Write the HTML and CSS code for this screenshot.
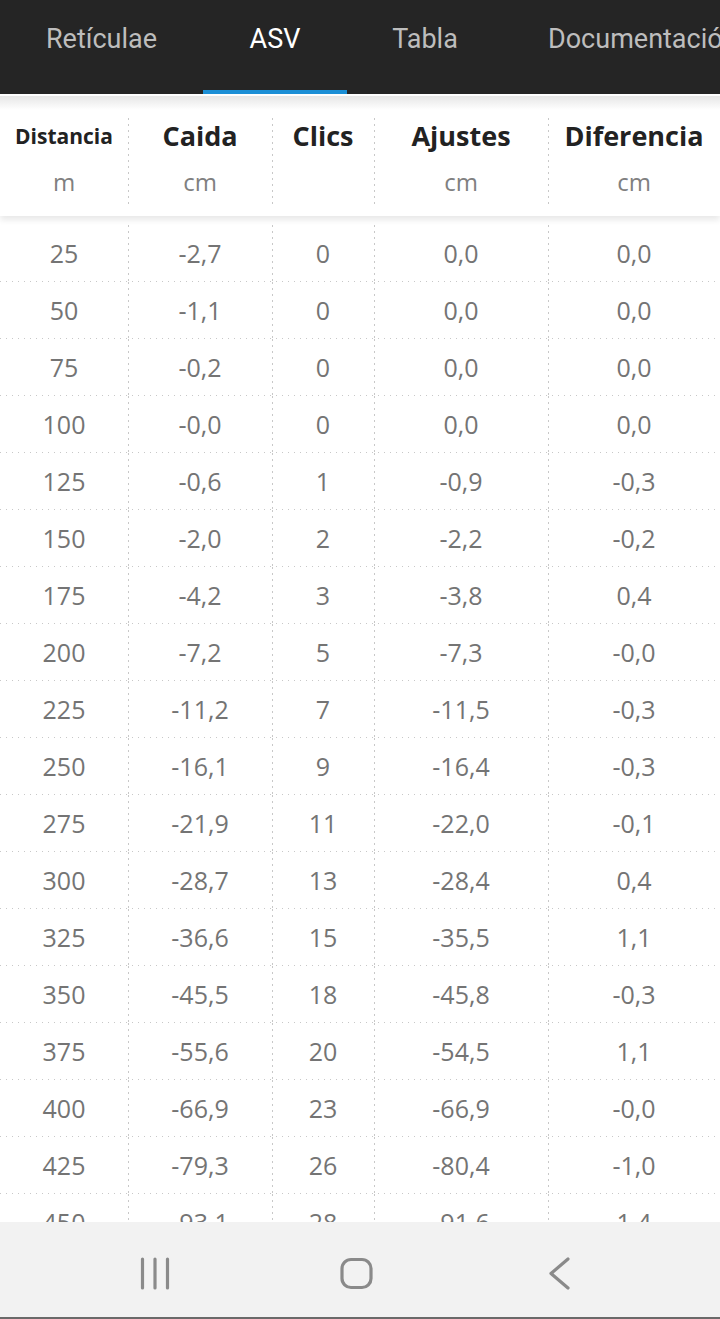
FILE: index.html
```html
<!DOCTYPE html>
<html lang="es">
<head>
    <meta charset="UTF-8">
    <meta name="viewport" content="width=device-width, initial-scale=1.0">
    <title>ASV</title>
    <link rel="stylesheet" href="styles.css">
</head>
<body>
    <div class="tabs">
        <div class="tab tab-ret">Retículae</div>
        <div class="tab tab-asv active">ASV</div>
        <div class="tab tab-tabla">Tabla</div>
        <div class="tab tab-doc">Documentación</div>
    </div>

    <div class="content">
        <div class="table-head">
            <div class="th first"><div class="title small">Distancia</div><div class="unit">m</div></div>
            <div class="th"><div class="title">Caida</div><div class="unit">cm</div></div>
            <div class="th"><div class="title">Clics</div><div class="unit"></div></div>
            <div class="th"><div class="title">Ajustes</div><div class="unit">cm</div></div>
            <div class="th"><div class="title">Diferencia</div><div class="unit">cm</div></div>
        </div>
        <div class="rows" id="rows"></div>
    </div>

    <div class="navbar">
        <svg class="nav-icon" viewBox="0 0 60 40">
            <line x1="17.5" y1="6" x2="17.5" y2="35"/>
            <line x1="30" y1="6" x2="30" y2="35"/>
            <line x1="42.5" y1="6" x2="42.5" y2="35"/>
        </svg>
        <svg class="nav-icon" viewBox="0 0 60 40">
            <rect x="15" y="6.5" width="29" height="28" rx="9"/>
        </svg>
        <svg class="nav-icon" viewBox="0 0 60 40">
            <polyline points="39,6 22,20.5 39,35"/>
        </svg>
    </div>

    <script>
const data = [
    ['25', '-2,7', '0', '0,0', '0,0'],
    ['50', '-1,1', '0', '0,0', '0,0'],
    ['75', '-0,2', '0', '0,0', '0,0'],
    ['100', '-0,0', '0', '0,0', '0,0'],
    ['125', '-0,6', '1', '-0,9', '-0,3'],
    ['150', '-2,0', '2', '-2,2', '-0,2'],
    ['175', '-4,2', '3', '-3,8', '0,4'],
    ['200', '-7,2', '5', '-7,3', '-0,0'],
    ['225', '-11,2', '7', '-11,5', '-0,3'],
    ['250', '-16,1', '9', '-16,4', '-0,3'],
    ['275', '-21,9', '11', '-22,0', '-0,1'],
    ['300', '-28,7', '13', '-28,4', '0,4'],
    ['325', '-36,6', '15', '-35,5', '1,1'],
    ['350', '-45,5', '18', '-45,8', '-0,3'],
    ['375', '-55,6', '20', '-54,5', '1,1'],
    ['400', '-66,9', '23', '-66,9', '-0,0'],
    ['425', '-79,3', '26', '-80,4', '-1,0'],
    ['450', '-93,1', '28', '-91,6', '1,4'],
    ['475', '-108,2', '31', '-107,4', '0,8']
];

const rows = document.getElementById('rows');
data.forEach(values => {
    const row = document.createElement('div');
    row.className = 'row';
    values.forEach((value, i) => {
        const cell = document.createElement('div');
        cell.className = i === 0 ? 'cell first' : 'cell';
        cell.textContent = value;
        row.appendChild(cell);
    });
    rows.appendChild(row);
});
    </script>
</body>
</html>
```

FILE: styles.css
```css
body {
    margin: 0;
    height: 1319px;
    display: flex;
    flex-direction: column;
    overflow: hidden;
    background-color: #fff;
    font-family: "Open Sans", "Liberation Sans", sans-serif;
}

.tabs {
    display: flex;
    height: 94px;
    flex-shrink: 0;
    background-color: #252525;
    overflow: hidden;
    white-space: nowrap;
}

.tab {
    box-sizing: border-box;
    height: 94px;
    padding-top: 21px;
    line-height: 36px;
    text-align: center;
    flex-shrink: 0;
    font-family: Roboto, "Noto Sans", sans-serif;
    font-size: 27px;
    color: #bdbdbd;
}

.tab-ret { width: 203px; }
.tab-asv { width: 144px; }
.tab-tabla { width: 156px; }
.tab-doc { width: 262px; text-align: left; padding-left: 45px; }

.tab.active {
    color: #fff;
    border-bottom: 4px solid #1b8fd6;
}

.content {
    flex: 1;
    overflow: hidden;
    padding-top: 2px;
}

.table-head {
    display: grid;
    grid-template-columns: 128px 144px 102px 174px 172px;
    height: 120px;
    box-sizing: border-box;
    padding: 22px 0 11px;
    background: linear-gradient(#e6e6e6, #fff 14px);
    box-shadow: 0 4px 6px rgba(0, 0, 0, 0.09);
    position: relative;
}

.th {
    text-align: center;
    background: repeating-linear-gradient(to bottom, #c8c8c8 0 2px, transparent 2px 6px) left top / 1px 100% no-repeat;
}

.th.first,
.cell.first {
    background-image: none;
}

.title {
    font-weight: 700;
    font-size: 27px;
    line-height: 36px;
    color: #222;
}

.title.small {
    font-size: 21px;
}

.unit {
    margin-top: 14px;
    font-size: 24px;
    line-height: 28px;
    color: #808080;
}

.rows {
    margin-top: 9px;
}

.row {
    display: grid;
    grid-template-columns: 128px 144px 102px 174px 172px;
    height: 57px;
    background: repeating-linear-gradient(to right, #c8c8c8 0 1px, transparent 1px 6px) left bottom / 100% 1px no-repeat;
}

.cell {
    text-align: center;
    line-height: 56px;
    font-size: 25px;
    color: #747474;
    background: repeating-linear-gradient(to bottom, #c8c8c8 0 2px, transparent 2px 6px) left top / 1px 100% no-repeat;
}

.navbar {
    height: 97px;
    flex-shrink: 0;
    box-sizing: border-box;
    display: flex;
    gap: 142px;
    padding: 31px 0 0 125px;
    background-color: #f2f2f2;
    border-bottom: 2px solid #6a6a6a;
}

.nav-icon {
    width: 60px;
    height: 40px;
    fill: none;
    stroke: #8a8a8a;
    stroke-width: 3.2;
    stroke-linecap: round;
    stroke-linejoin: round;
}
```
